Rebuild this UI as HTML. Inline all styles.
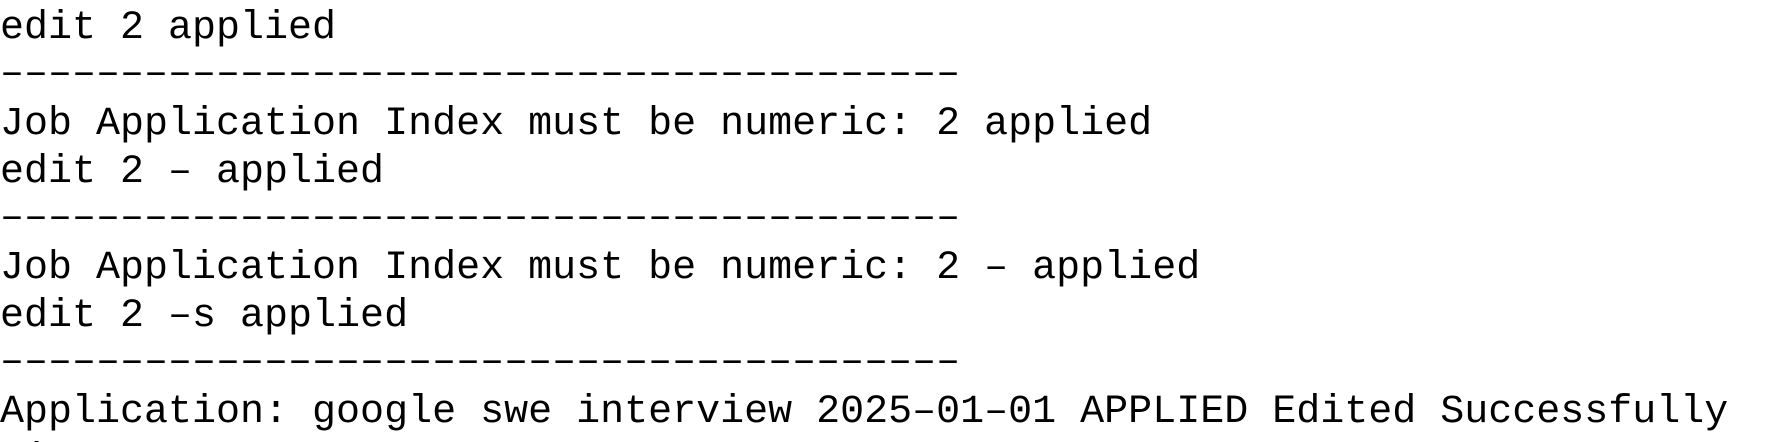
<!DOCTYPE html>
<html><head><style>
html,body{margin:0;padding:0;background:#fff;width:1766px;height:442px;overflow:hidden}
pre{margin:0;padding:0;font-family:"Liberation Mono",monospace;font-size:40px;line-height:48px;color:#000;position:absolute;top:5px;left:0;height:437px;overflow:hidden}
.d{position:relative;top:-2px}
</style></head><body><pre>edit 2 applied
<span class="d">––––––––––––––––––––––––––––––––––––––––</span>
Job Application Index must be numeric: 2 applied
edit 2 – applied
<span class="d">––––––––––––––––––––––––––––––––––––––––</span>
Job Application Index must be numeric: 2 – applied
edit 2 –s applied
<span class="d">––––––––––––––––––––––––––––––––––––––––</span>
Application: google swe interview 2025–01–01 APPLIED Edited Successfully
Li</pre></body></html>
